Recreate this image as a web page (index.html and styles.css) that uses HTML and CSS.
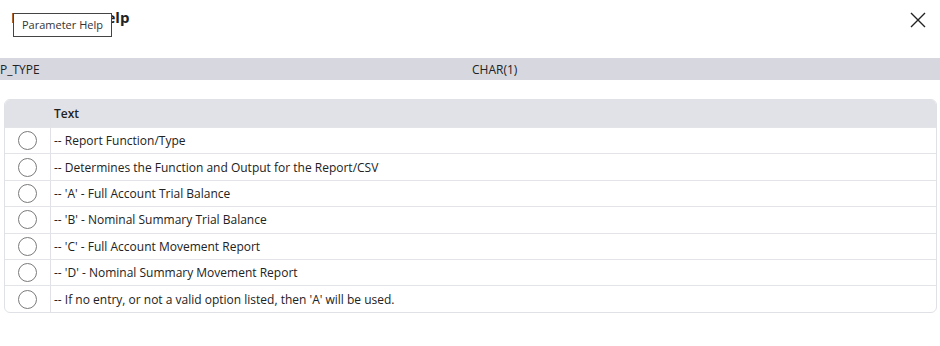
FILE: index.html
```html
<!DOCTYPE html>
<html lang="en">
  <head>
    <meta charset="UTF-8" />
    <title>Parameter Help</title>
    <link rel="stylesheet" href="styles.css">
  </head>
  <body>
    <div class="dialog">
      <div class="dialog-head">
        <h2 class="dialog-title">Parameter Help</h2>
        <span class="tooltip">Parameter Help</span>
        <button class="close-btn" aria-label="Close">
          <svg width="16" height="16" viewBox="0 0 16 16">
            <path d="M1 1 L15 15 M15 1 L1 15" stroke="#222" stroke-width="1.4" fill="none" />
          </svg>
        </button>
      </div>

      <div class="param-bar">
        <span class="param-name">P_TYPE</span>
        <span class="param-type">CHAR(1)</span>
      </div>

      <div class="help-table">
        <div class="help-row help-header">
          <div class="cell-pick"></div>
          <div class="cell-text">Text</div>
        </div>
        <div class="help-row">
          <div class="cell-pick"><span class="radio"></span></div>
          <div class="cell-text">-- Report Function/Type</div>
        </div>
        <div class="help-row">
          <div class="cell-pick"><span class="radio"></span></div>
          <div class="cell-text">-- Determines the Function and Output for the Report/CSV</div>
        </div>
        <div class="help-row">
          <div class="cell-pick"><span class="radio"></span></div>
          <div class="cell-text">-- 'A' - Full Account Trial Balance</div>
        </div>
        <div class="help-row">
          <div class="cell-pick"><span class="radio"></span></div>
          <div class="cell-text">-- 'B' - Nominal Summary Trial Balance</div>
        </div>
        <div class="help-row">
          <div class="cell-pick"><span class="radio"></span></div>
          <div class="cell-text">-- 'C' - Full Account Movement Report</div>
        </div>
        <div class="help-row">
          <div class="cell-pick"><span class="radio"></span></div>
          <div class="cell-text">-- 'D' - Nominal Summary Movement Report</div>
        </div>
        <div class="help-row">
          <div class="cell-pick"><span class="radio"></span></div>
          <div class="cell-text">-- If no entry, or not a valid option listed, then 'A' will be used.</div>
        </div>
      </div>
    </div>
  </body>
</html>
```

FILE: styles.css
```css
body {
  margin: 0;
  background: white;
  font-family: "Open Sans", sans-serif;
  color: #222;
}

.dialog-head {
  position: relative;
  height: 58px;
  display: flex;
  align-items: flex-start;
  justify-content: space-between;
  padding: 0 14px 0 11px;
}

.dialog-title {
  margin: 7px 0 0;
  font-size: 15px;
  font-weight: 700;
}

.tooltip {
  position: absolute;
  left: 13px;
  top: 13px;
  padding: 4px 8px;
  font-size: 11px;
  line-height: 14px;
  background: white;
  border: 1px solid #444;
  color: #333;
}

.close-btn {
  margin-top: 12px;
  padding: 0;
  border: none;
  background: none;
  cursor: pointer;
}

.param-bar {
  display: grid;
  grid-template-columns: 1fr 1fr;
  height: 22px;
  align-items: center;
  background: #d6d7df;
  font-size: 12px;
}

.param-type {
  padding-left: 2px;
}

.help-table {
  margin: 19px 3px 0 4px;
  border: 1px solid #e0e1e6;
  border-radius: 6px;
  overflow: hidden;
}

.help-row {
  display: flex;
  box-sizing: border-box;
  height: 26.4px;
  border-top: 1px solid #e3e4e8;
  font-size: 12px;
}

.help-row:first-child {
  border-top: none;
}

.help-header {
  height: 27px;
  background: #e1e2e7;
  font-weight: 600;
}

.cell-pick {
  width: 45px;
  flex-shrink: 0;
  display: flex;
  align-items: center;
  justify-content: center;
  border-right: 1px solid #e0e1e6;
}

.cell-text {
  display: flex;
  align-items: center;
  padding-left: 3px;
}

.radio {
  width: 17px;
  height: 17px;
  border: 1px solid #7a7a7a;
  border-radius: 50%;
  background: white;
}
```
